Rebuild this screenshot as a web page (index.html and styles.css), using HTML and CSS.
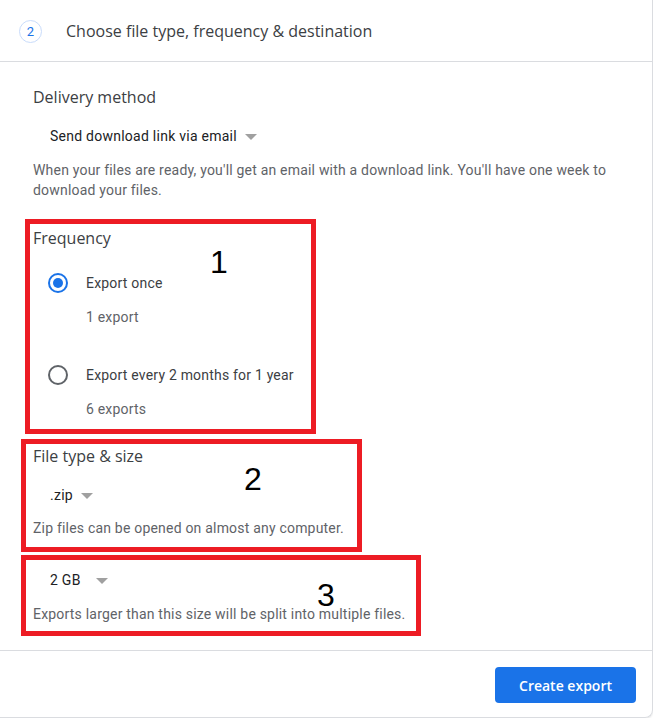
FILE: index.html
```html
<!DOCTYPE html>
<html>
    <head>
        <meta charset="utf-8">
        <title>Create export</title>
<link rel="stylesheet" href="styles.css">
    </head>
    <body>
        <div class="card">
            <div class="header">
                <span class="step">2</span>
                <span class="title">Choose file type, frequency &amp; destination</span>
            </div>

            <div class="content">
                <div class="label label-delivery">Delivery method</div>
                <div class="select select-delivery">Send download link via email <span class="arrow"></span></div>
                <div class="desc desc-delivery">When your files are ready, you'll get an email with a download link. You'll have one week to download your files.</div>

                <div class="label label-freq">Frequency</div>
                <div class="option option-first">
                    <span class="radio checked"></span>
                    <span class="option-text">Export once</span>
                </div>
                <div class="sub">1 export</div>
                <div class="option option-second">
                    <span class="radio"></span>
                    <span class="option-text">Export every 2 months for 1 year</span>
                </div>
                <div class="sub">6 exports</div>

                <div class="label label-type">File type &amp; size</div>
                <div class="select select-type">.zip <span class="arrow"></span></div>
                <div class="desc desc-type">Zip files can be opened on almost any computer.</div>

                <div class="select select-size">2 GB <span class="arrow arrow-size"></span></div>
                <div class="desc desc-size">Exports larger than this size will be split into multiple files.</div>
            </div>

            <div class="footer">
                <button class="btn">Create export</button>
            </div>
        </div>

        <!-- annotations drawn over the screenshot -->
        <div class="mark mark-1"></div>
        <div class="mark mark-2"></div>
        <div class="mark mark-3"></div>
        <div class="num num-1">1</div>
        <div class="num num-2">2</div>
        <div class="num num-3">3</div>
    </body>
</html>
```

FILE: styles.css
```css
body {
  margin: 0;
  background-color: white;
  font-family: Roboto, 'Liberation Sans', sans-serif;
  position: relative;
}

.card {
  width: 652px;
  border-right: 1px solid #dadce0;
  border-bottom: 1px solid #dadce0;
  border-radius: 0 0 8px 0;
  box-shadow: 0 1px 2px rgba(60, 64, 67, 0.15);
}

.header {
  height: 61px;
  border-bottom: 1px solid #dadce0;
  display: flex;
  align-items: center;
  padding-left: 19px;
}

.step {
  width: 21px;
  height: 21px;
  border: 1px solid #c9dcfb;
  border-radius: 50%;
  color: #1a73e8;
  font-size: 13px;
  display: flex;
  align-items: center;
  justify-content: center;
  margin-top: 1px;
}

.title {
  margin-left: 24px;
  font-family: 'Open Sans', sans-serif;
  font-size: 16px;
  color: #3c4043;
}

.content {
  padding: 0 33px;
}

.label {
  font-family: 'Open Sans', sans-serif;
  font-size: 16px;
  line-height: 20px;
  color: #3c4043;
}

.label-delivery { margin-top: 25px; }
.label-freq { margin-top: 28px; }
.label-type { margin-top: 27px; }

.select {
  padding-left: 17px;
  font-size: 14px;
  line-height: 20px;
  letter-spacing: 0.25px;
  color: #202124;
  display: flex;
  align-items: center;
}

.select-delivery { margin-top: 19px; }
.select-type { margin-top: 19px; }
.select-size { margin-top: 32px; }

.arrow {
  display: inline-block;
  width: 0;
  height: 0;
  border-left: 6px solid transparent;
  border-right: 6px solid transparent;
  border-top: 6px solid #a0a0a0;
  margin-left: 8px;
  margin-top: 2px;
}

.arrow-size {
  margin-left: 15px;
}

.desc {
  font-size: 14px;
  line-height: 20px;
  letter-spacing: 0.2px;
  color: #5f6368;
}

.desc-delivery { margin-top: 14px; }
.desc-type { margin-top: 13px; }
.desc-size { margin-top: 14px; }

.option {
  display: flex;
  align-items: center;
  padding-left: 15px;
  height: 20px;
}

.option-first { margin-top: 25px; }
.option-second { margin-top: 38px; }

.radio {
  width: 16px;
  height: 16px;
  border: 2px solid #5f6368;
  border-radius: 50%;
  display: flex;
  align-items: center;
  justify-content: center;
}

.radio.checked {
  border-color: #1a73e8;
}

.radio.checked::after {
  content: '';
  width: 10px;
  height: 10px;
  border-radius: 50%;
  background-color: #1a73e8;
}

.option-text {
  margin-left: 18px;
  font-size: 14px;
  letter-spacing: 0.2px;
  color: #3c4043;
}

.sub {
  margin-top: 14px;
  padding-left: 53px;
  font-size: 14px;
  line-height: 20px;
  letter-spacing: 0.2px;
  color: #5f6368;
}

.footer {
  margin-top: 26px;
  border-top: 1px solid #dadce0;
  display: flex;
  justify-content: flex-end;
  padding: 16px 16px 14px 0;
}

.btn {
  width: 141px;
  height: 36px;
  border: none;
  border-radius: 4px;
  background-color: #1a73e8;
  color: white;
  font-family: 'Open Sans', sans-serif;
  font-size: 14px;
  font-weight: 600;
}

.mark {
  position: absolute;
  border: 5px solid #ed1c24;
}

.mark-1 { left: 25px; top: 219px; width: 281px; height: 205px; }
.mark-2 { left: 21px; top: 439px; width: 331px; height: 103px; }
.mark-3 { left: 21px; top: 555px; width: 390px; height: 71px; }

.num {
  position: absolute;
  font-family: 'Liberation Sans', Arial, sans-serif;
  font-size: 32px;
  line-height: 32px;
  color: black;
}

.num-1 { left: 210px; top: 246px; }
.num-2 { left: 244px; top: 463px; }
.num-3 { left: 317px; top: 579px; }
```
